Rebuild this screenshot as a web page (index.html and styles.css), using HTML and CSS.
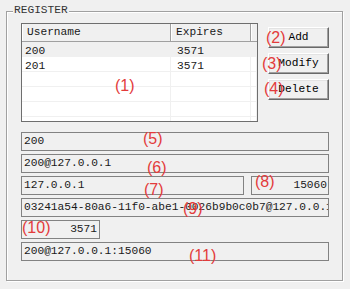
FILE: index.html
```html
<!DOCTYPE html>
<html lang="en">
<head>
    <meta charset="UTF-8">
    <meta name="viewport" content="width=device-width, initial-scale=1.0">
    <title>Register</title>
    <link rel="stylesheet" href="styles.css">
</head>
<body>
    <div class="group">
        <span class="group-title">REGISTER</span>

        <div class="top-row">
            <div class="list">
                <div class="list-head">
                    <div class="head-cell">Username</div>
                    <div class="head-cell">Expires</div>
                    <div class="head-cell last"></div>
                </div>
                <div class="list-row selected"><div class="cell">200</div><div class="cell sub">3571</div><div class="cell"></div></div>
                <div class="list-row"><div class="cell">201</div><div class="cell sub">3571</div><div class="cell"></div></div>
                <div class="list-row"><div class="cell"></div><div class="cell sub"></div><div class="cell"></div></div>
                <div class="list-row"><div class="cell"></div><div class="cell sub"></div><div class="cell"></div></div>
                <div class="list-row"><div class="cell"></div><div class="cell sub"></div><div class="cell"></div></div>
                <div class="list-row"><div class="cell"></div><div class="cell sub"></div><div class="cell"></div></div>
            </div>

            <div class="buttons">
                <button class="btn">Add</button>
                <button class="btn">Modify</button>
                <button class="btn">Delete</button>
            </div>
        </div>

        <div class="fields">
            <div class="field">200</div>
            <div class="field">200@127.0.0.1</div>
            <div class="field-row">
                <div class="field grow">127.0.0.1</div>
                <div class="field port">15060</div>
            </div>
            <div class="field">03241a54-80a6-11f0-abe1-0026b9b0c0b7@127.0.0.1</div>
            <div class="field expires">3571</div>
            <div class="field">200@127.0.0.1:15060</div>
        </div>
    </div>

    <!-- callout numbers -->
    <span class="tag tag-1">(1)</span>
    <span class="tag tag-2">(2)</span>
    <span class="tag tag-3">(3)</span>
    <span class="tag tag-4">(4)</span>
    <span class="tag tag-5">(5)</span>
    <span class="tag tag-6">(6)</span>
    <span class="tag tag-7">(7)</span>
    <span class="tag tag-8">(8)</span>
    <span class="tag tag-9">(9)</span>
    <span class="tag tag-10">(10)</span>
    <span class="tag tag-11">(11)</span>
</body>
</html>
```

FILE: styles.css
```css
:root {
    --face: #f0f0f0;
    --edge: #a0a0a0;
    --dark-edge: #696969;
    --field-border: #828282;
    --mark: #e33b3b;
}

* {
    margin: 0;
    padding: 0;
    box-sizing: border-box;
}

body {
    position: relative;
    width: 350px;
    height: 289px;
    overflow: hidden;
    background-color: var(--face);
    color: #1a1a1a;
    font-family: 'Liberation Mono', 'Courier New', monospace;
    font-size: 11.2px;
}

.group {
    position: relative;
    margin: 11px 0 0 6px;
    width: 337px;
    padding: 11px 13px 19px 14px;
    border: 1px solid var(--edge);
    box-shadow: inset 1px 1px #fff, 1px 1px #fff;
}

.group-title {
    position: absolute;
    left: 6px;
    top: -8px;
    padding: 0 1px;
    background-color: var(--face);
    line-height: 13px;
    color: #333;
}

.top-row {
    display: flex;
}

.list {
    width: 238px;
    height: 99px;
    border: 1px solid #6e6e6e;
    background-color: #fff;
    overflow: hidden;
}

.list-head,
.list-row {
    display: grid;
    grid-template-columns: 149px 80px 1fr;
}

.list-head {
    height: 18px;
    border-bottom: 1px solid var(--edge);
    background-color: var(--face);
}

.head-cell {
    padding-left: 5px;
    line-height: 17px;
    border-right: 1px solid var(--edge);
    box-shadow: inset 1px 0 #fff;
    white-space: nowrap;
}

.head-cell.last {
    border-right: none;
}

.list-row {
    height: 15px;
    border-bottom: 1px solid var(--face);
}

.list-row.selected {
    background-color: var(--face);
}

.cell {
    padding: 2px 0 0 3px;
    line-height: 14px;
    border-right: 1px solid var(--face);
}

.cell.sub {
    padding-left: 6px;
}

.buttons {
    display: flex;
    flex-direction: column;
    gap: 5px;
    margin-left: 10px;
    padding-top: 4px;
}

.btn {
    width: 61px;
    height: 21px;
    background-color: var(--face);
    color: #000;
    font: inherit;
    line-height: 19px;
    border: 1px solid;
    border-color: #fff var(--dark-edge) var(--dark-edge) #fff;
    box-shadow: inset -1px -1px var(--edge), inset 1px 1px #e3e3e3;
    cursor: pointer;
}

.fields {
    display: flex;
    flex-direction: column;
    gap: 3px;
    margin-top: 10px;
}

.field {
    height: 19px;
    padding: 0 2px;
    line-height: 17px;
    border: 1px solid var(--field-border);
    white-space: nowrap;
    overflow: hidden;
}

.field-row {
    display: flex;
    gap: 7px;
}

.field.grow {
    flex: 1;
}

.field.port {
    width: 78px;
    padding-right: 1px;
    text-align: right;
}

.field.expires {
    width: 79px;
    text-align: right;
}

/* red callout numbers laid over the form */
.tag {
    position: absolute;
    color: var(--mark);
    font-family: 'Liberation Sans', Arial, sans-serif;
    font-size: 16px;
    line-height: 16px;
}

.tag-1 { left: 115px; top: 78px; }
.tag-2 { left: 266px; top: 30px; }
.tag-3 { left: 262px; top: 56px; }
.tag-4 { left: 264px; top: 81px; }
.tag-5 { left: 143px; top: 131px; }
.tag-6 { left: 147px; top: 160px; }
.tag-7 { left: 144px; top: 182px; }
.tag-8 { left: 255px; top: 174px; }
.tag-9 { left: 183px; top: 201px; }
.tag-10 { left: 22px; top: 220px; }
.tag-11 { left: 189px; top: 248px; }
```
